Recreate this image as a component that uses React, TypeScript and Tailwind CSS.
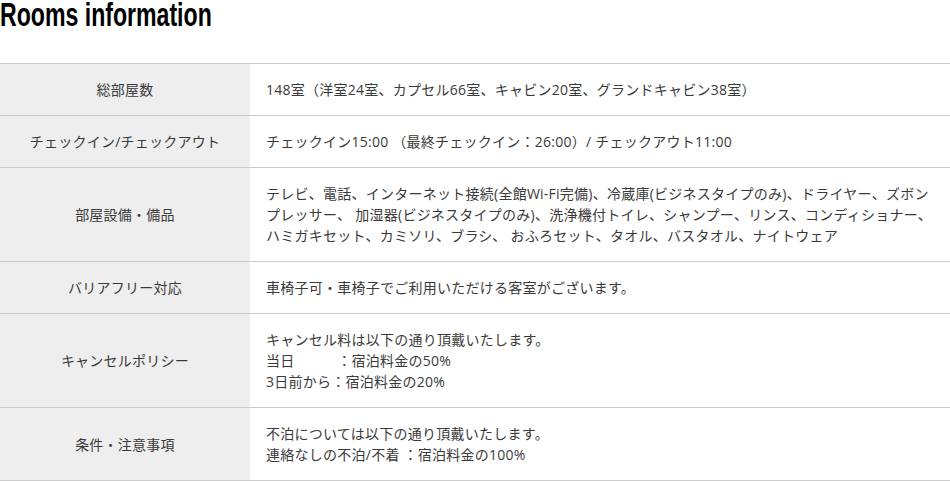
const rows: { label: string; lines: string[] }[] = [
  {
    label: '総部屋数',
    lines: ['148室（洋室24室、カプセル66室、キャビン20室、グランドキャビン38室）'],
  },
  {
    label: 'チェックイン/チェックアウト',
    lines: ['チェックイン15:00 （最終チェックイン：26:00）/ チェックアウト11:00'],
  },
  {
    label: '部屋設備・備品',
    lines: [
      'テレビ、電話、インターネット接続(全館Wi-Fi完備)、冷蔵庫(ビジネスタイプのみ)、ドライヤー、ズボン',
      'プレッサー、 加湿器(ビジネスタイプのみ)、洗浄機付トイレ、シャンプー、リンス、コンディショナー、',
      'ハミガキセット、カミソリ、ブラシ、 おふろセット、タオル、バスタオル、ナイトウェア',
    ],
  },
  {
    label: 'バリアフリー対応',
    lines: ['車椅子可・車椅子でご利用いただける客室がございます。'],
  },
  {
    label: 'キャンセルポリシー',
    lines: [
      'キャンセル料は以下の通り頂戴いたします。',
      '当日　　　：宿泊料金の50%',
      '3日前から：宿泊料金の20%',
    ],
  },
  {
    label: '条件・注意事項',
    lines: ['不泊については以下の通り頂戴いたします。', '連絡なしの不泊/不着 ：宿泊料金の100%'],
  },
];

export default function App() {
  return (
    <div className="w-[950px] bg-white text-[#3a3a3a] font-['Open_Sans','Noto_Sans_CJK_JP',sans-serif]">
      {/* condensed bold heading, squeezed to match the display face */}
      <h2 className="h-[26px]">
        <span className="inline-block origin-top-left scale-x-[0.7] -translate-y-[2px] font-['Liberation_Sans',sans-serif] font-bold text-[33px] leading-[33px] text-black whitespace-nowrap">
          Rooms information
        </span>
      </h2>

      <table className="mt-[37px] w-full border-collapse text-[14px] leading-[21px] tracking-[0.25px]">
        <tbody>
          {rows.map(row => (
            <tr key={row.label} className="border-y border-[#cccccc]">
              <th className="w-[250px] bg-[#eeeeee] py-[15px] px-4 text-center font-normal align-middle">
                {row.label}
              </th>
              <td className="py-[15px] px-4 align-middle whitespace-nowrap">
                {row.lines.map(line => (
                  <div key={line}>{line}</div>
                ))}
              </td>
            </tr>
          ))}
        </tbody>
      </table>
    </div>
  );
}
